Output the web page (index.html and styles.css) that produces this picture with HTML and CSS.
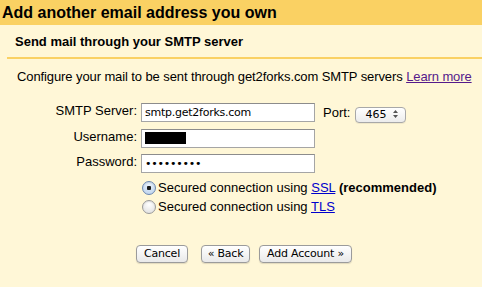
FILE: index.html
```html
<!DOCTYPE html>
<html lang="en">

<head>
    <meta charset="UTF-8">
    <meta name="viewport" content="width=device-width, initial-scale=1.0">
    <title>Add another email address you own</title>
    <link rel="stylesheet" href="styles.css">
</head>

<body>
    <div class="titlebar">Add another email address you own</div>

    <section class="panel">
        <div class="subhead">Send mail through your SMTP server</div>

        <p class="intro">
            Configure your mail to be sent through get2forks.com SMTP servers
            <a href="#" class="visited">Learn more</a>
        </p>

        <form class="smtp-form">
            <label class="field-label" for="smtpServer">SMTP Server:</label>
            <input class="field" id="smtpServer" type="text" value="smtp.get2forks.com">
            <div class="port">
                <label class="field-label" for="port">Port:</label>
                <span class="select-wrap">
                    <select id="port" class="select">
                        <option>465</option>
                        <option>587</option>
                        <option>25</option>
                    </select>
                    <svg class="select-arrows" width="7" height="10" viewBox="0 0 7 10">
                        <path d="M3.5 1 L6 4 H1 Z M3.5 9 L6 6 H1 Z" fill="#555"/>
                    </svg>
                </span>
            </div>

            <label class="field-label">Username:</label>
            <div class="field"><span class="redact"></span></div>

            <label class="field-label" for="password">Password:</label>
            <input class="field" id="password" type="password" value="secretpwd">

            <div class="options">
                <label class="radio-row">
                    <input type="radio" name="secure" checked>
                    <span>Secured connection using <a href="#">SSL</a> <b>(recommended)</b></span>
                </label>
                <label class="radio-row">
                    <input type="radio" name="secure">
                    <span>Secured connection using <a href="#">TLS</a></span>
                </label>
            </div>
        </form>

        <div class="actions">
            <button type="button" class="btn btn-cancel">Cancel</button>
            <button type="button" class="btn btn-back">&laquo; Back</button>
            <button type="button" class="btn btn-add">Add Account &raquo;</button>
        </div>
    </section>
</body>

</html>
```

FILE: styles.css
```css
body {
    margin: 0;
    padding: 0;
    height: 287px;
    overflow: hidden;
    font-family: "Liberation Sans", Arial, sans-serif;
    font-size: 13px;
    color: #000000;
    background-color: #fff7d7;
}

.titlebar {
    height: 25px;
    line-height: 25px;
    padding-left: 2px;
    background-color: #fad163;
    font-size: 16px;
    font-weight: bold;
}

.panel {
    background-color: #fff7d7;
}

.subhead {
    margin-left: 7px;
    padding: 9px 0 7px 8px;
    line-height: 16px;
    font-weight: bold;
    border-bottom: 2px solid #fad163;
}

.intro {
    margin: 0;
    padding: 10px 0 0 17px;
    line-height: 16px;
    letter-spacing: -0.1px;
}

a {
    color: #0000cc;
}

a.visited {
    color: #551a8b;
}

.smtp-form {
    display: grid;
    grid-template-columns: 137px 174px 1fr;
    column-gap: 4px;
    row-gap: 6.5px;
    margin-top: 18px;
    align-items: start;
}

.field-label {
    grid-column: 1;
    text-align: right;
    line-height: 16px;
}

.field {
    grid-column: 2;
    box-sizing: border-box;
    height: 19px;
    margin: 0;
    padding: 0 3px;
    border: 1px solid #a5a5a5;
    border-top-color: #8c8c8c;
    background-color: #ffffff;
    font-family: "DejaVu Sans", sans-serif;
    font-size: 11px;
    letter-spacing: -0.25px;
    color: #000000;
    outline: none;
}

div.field {
    display: flex;
    align-items: center;
}

.redact {
    display: inline-block;
    width: 41px;
    height: 12px;
    background-color: #000000;
}

.port {
    grid-column: 3;
    display: flex;
    align-items: center;
    gap: 5px;
    margin-left: 4px;
    margin-top: 3px;
}

.port .field-label {
    margin-top: -3px;
}

.select-wrap {
    position: relative;
    display: inline-block;
    height: 16px;
}

.select {
    appearance: none;
    box-sizing: border-box;
    width: 51px;
    height: 16px;
    margin: 0;
    padding: 0 0 0 9px;
    border: 1px solid #a8a8a8;
    border-radius: 4px;
    background: linear-gradient(to bottom, #ffffff, #ececec);
    font-family: "DejaVu Sans", sans-serif;
    font-size: 11px;
    color: #000000;
    box-shadow: 0 1px 0 rgba(0, 0, 0, 0.06);
}

.select-arrows {
    position: absolute;
    right: 7px;
    top: 3px;
    pointer-events: none;
}

.options {
    grid-column: 2 / 4;
    display: flex;
    flex-direction: column;
    gap: 3px;
    margin-top: 0;
}

.radio-row {
    display: flex;
    align-items: center;
    line-height: 16px;
}

.radio-row input {
    appearance: none;
    box-sizing: border-box;
    flex: none;
    width: 14px;
    height: 14px;
    margin: 0 2px 0 1px;
    border: 1px solid #9a9a9a;
    border-radius: 50%;
    background: radial-gradient(circle at 50% 30%, #ffffff, #dcdcdc);
    box-shadow: inset 0 1px 1px rgba(0, 0, 0, 0.08);
}

.radio-row input:checked {
    border-color: #6b87b1;
    background:
        radial-gradient(circle, #1b1b1b 0 2px, transparent 2.5px),
        radial-gradient(circle at 50% 30%, #e9f2fc, #b8cfeb);
}

.actions {
    display: flex;
    margin: 30px 0 0 136px;
}

.btn {
    box-sizing: border-box;
    height: 18px;
    padding: 0;
    border: 1px solid #9b9b9b;
    border-radius: 4px;
    background: linear-gradient(to bottom, #ffffff, #e9e9e9);
    font-family: "DejaVu Sans", sans-serif;
    font-size: 11px;
    letter-spacing: -0.2px;
    color: #000000;
    box-shadow: 0 1px 1px rgba(0, 0, 0, 0.12);
    cursor: pointer;
}

.btn-cancel {
    width: 52px;
}

.btn-back {
    width: 49px;
    margin-left: 13px;
}

.btn-add {
    width: 93px;
    margin-left: 9px;
}
```
